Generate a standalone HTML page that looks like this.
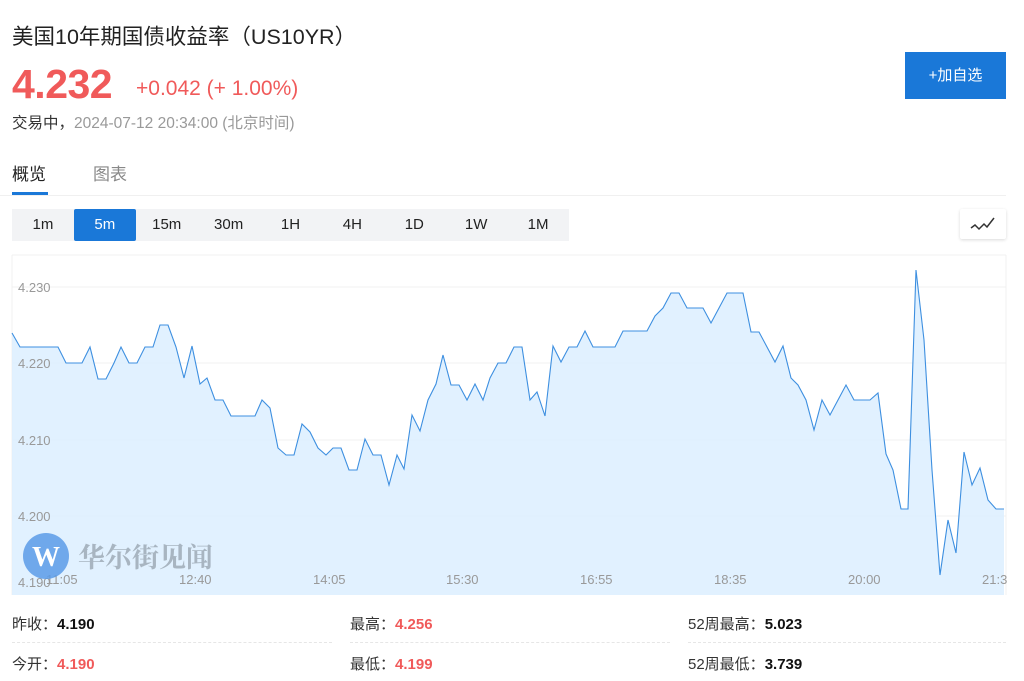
<!DOCTYPE html>
<html><head><meta charset="utf-8"><style>
*{margin:0;padding:0;box-sizing:border-box}
body{width:1024px;height:681px;background:#fff;font-family:"Liberation Sans","Noto Sans CJK SC",sans-serif;color:#333;position:relative;overflow:hidden}
.a{position:absolute;white-space:nowrap}
.tabs{position:absolute;left:12px;top:209px;width:557px;height:32px;background:#f2f3f5;display:flex}
.tabs div{flex:1;text-align:center;line-height:32px;font-size:15px;color:#222}
.tabs .on{background:#1a78d8;color:#fff;border-radius:2px}
.stat{position:absolute;font-size:15px;color:#333}
.stat b{font-weight:bold;color:#111}
.stat b.r{color:#f05a5a}
.sep{position:absolute;top:642px;height:0;border-top:1px dashed #e6e6e6}
</style></head><body>
<div class="a" style="left:12px;top:20px;font-size:21.5px;color:#222">美国10年期国债收益率（US10YR）</div>
<div class="a" style="left:12px;top:61px;font-size:41px;font-weight:bold;color:#f05a5a;letter-spacing:-0.5px">4.232</div>
<div class="a" style="left:136px;top:77px;font-size:21px;color:#f05a5a">+0.042 (+ 1.00%)</div>
<div class="a" style="left:12px;top:111px;font-size:15.5px;color:#333">交易中，<span style="color:#999">2024-07-12 20:34:00 (北京时间)</span></div>
<div class="a" style="left:905px;top:52px;width:101px;height:47px;background:#1a78d8;color:#fff;font-size:15px;line-height:47px;text-align:center">+加自选</div>
<div class="a" style="left:12px;top:160px;font-size:17px;color:#222">概览</div>
<div class="a" style="left:93px;top:160px;font-size:17px;color:#888">图表</div>
<div class="a" style="left:12px;top:192px;width:36px;height:3px;background:#1a78d8"></div>
<div class="a" style="left:0;top:195px;width:1006px;height:1px;background:#f0f0f0"></div>
<div class="tabs"><div>1m</div><div class="on">5m</div><div>15m</div><div>30m</div><div>1H</div><div>4H</div><div>1D</div><div>1W</div><div>1M</div></div>
<div class="a" style="left:960px;top:209px;width:46px;height:30px;background:#fff;box-shadow:0 1px 3px rgba(0,0,0,.15);border-radius:2px">
<svg width="46" height="30"><polyline points="11,19 15,16 19,20 24,15 27,18 34,9" fill="none" stroke="#333" stroke-width="1.5"/></svg></div>
<svg class="a" style="left:0;top:0" width="1024" height="681">
<g stroke="#f0f0f0" stroke-width="1">
<line x1="12" y1="255" x2="1006" y2="255"/><line x1="12" y1="287" x2="1006" y2="287"/><line x1="12" y1="363" x2="1006" y2="363"/><line x1="12" y1="440" x2="1006" y2="440"/><line x1="12" y1="516" x2="1006" y2="516"/>
<line x1="12" y1="255" x2="12" y2="595"/><line x1="1006" y1="255" x2="1006" y2="595"/>
</g>
<polygon fill="#dcefff" fill-opacity="0.85" points="12,333 20,347 58,347 66,363 82,363 90,347 98,379 106,379 114,363 121,347 129,363 137,363 145,347 153,347 160,325 168,325 176,347 184,378 192,346 200,384 207,378 215,400 223,400 231,416 255,416 262,400 270,408 278,448 286,455 294,455 302,424 310,432 318,448 326,455 333,448 341,448 349,470 357,470 365,439 373,455 381,455 389,485 397,455 404,469 412,415 420,431 428,400 436,384 443,355 451,385 459,385 467,400 475,384 483,400 490,378 498,363 506,363 514,347 522,347 530,400 537,392 545,416 553,346 561,362 569,347 577,347 585,331 593,347 615,347 623,331 647,331 655,316 663,308 671,293 679,293 687,308 703,308 711,323 719,308 727,293 743,293 751,332 759,332 767,347 775,362 783,346 791,378 798,385 806,400 814,430 822,400 830,415 838,400 846,385 854,400 870,400 878,393 886,454 893,470 901,509 908,509 916,270 924,340 932,470 940,575 948,520 956,553 964,452 972,485 980,468 988,500 996,509 1004,509 1004,595 12,595"/>
<polyline fill="none" stroke="#3d8fe0" stroke-width="1.1" points="12,333 20,347 58,347 66,363 82,363 90,347 98,379 106,379 114,363 121,347 129,363 137,363 145,347 153,347 160,325 168,325 176,347 184,378 192,346 200,384 207,378 215,400 223,400 231,416 255,416 262,400 270,408 278,448 286,455 294,455 302,424 310,432 318,448 326,455 333,448 341,448 349,470 357,470 365,439 373,455 381,455 389,485 397,455 404,469 412,415 420,431 428,400 436,384 443,355 451,385 459,385 467,400 475,384 483,400 490,378 498,363 506,363 514,347 522,347 530,400 537,392 545,416 553,346 561,362 569,347 577,347 585,331 593,347 615,347 623,331 647,331 655,316 663,308 671,293 679,293 687,308 703,308 711,323 719,308 727,293 743,293 751,332 759,332 767,347 775,362 783,346 791,378 798,385 806,400 814,430 822,400 830,415 838,400 846,385 854,400 870,400 878,393 886,454 893,470 901,509 908,509 916,270 924,340 932,470 940,575 948,520 956,553 964,452 972,485 980,468 988,500 996,509 1004,509"/>
<g font-family="Liberation Sans,sans-serif" font-size="13" fill="#999">
<text x="18" y="292">4.230</text><text x="18" y="368">4.220</text><text x="18" y="445">4.210</text><text x="18" y="521">4.200</text><text x="18" y="587">4.190</text>
<text x="46" y="584">11:05</text><text x="179" y="584">12:40</text><text x="313" y="584">14:05</text><text x="446" y="584">15:30</text><text x="580" y="584">16:55</text><text x="714" y="584">18:35</text><text x="848" y="584">20:00</text><text x="982" y="584">21:3</text>
</g>
<circle cx="46" cy="556" r="23" fill="#5a9be8" fill-opacity="0.85"/>
<text x="46" y="566" text-anchor="middle" font-family="Liberation Serif,serif" font-size="28" font-weight="bold" fill="#fff">W</text>
<text x="78" y="567" font-family="Noto Serif CJK SC,serif" font-size="27" font-weight="bold" fill="#9aa6b2" fill-opacity="0.8">华尔街见闻</text>
</svg>
<div class="stat" style="left:12px;top:613px">昨收：<b>4.190</b></div>
<div class="stat" style="left:350px;top:613px">最高：<b class="r">4.256</b></div>
<div class="stat" style="left:688px;top:613px">52周最高：<b>5.023</b></div>
<div class="sep" style="left:12px;width:320px"></div>
<div class="sep" style="left:350px;width:320px"></div>
<div class="sep" style="left:688px;width:318px"></div>
<div class="stat" style="left:12px;top:653px">今开：<b class="r">4.190</b></div>
<div class="stat" style="left:350px;top:653px">最低：<b class="r">4.199</b></div>
<div class="stat" style="left:688px;top:653px">52周最低：<b>3.739</b></div>
</body></html>
